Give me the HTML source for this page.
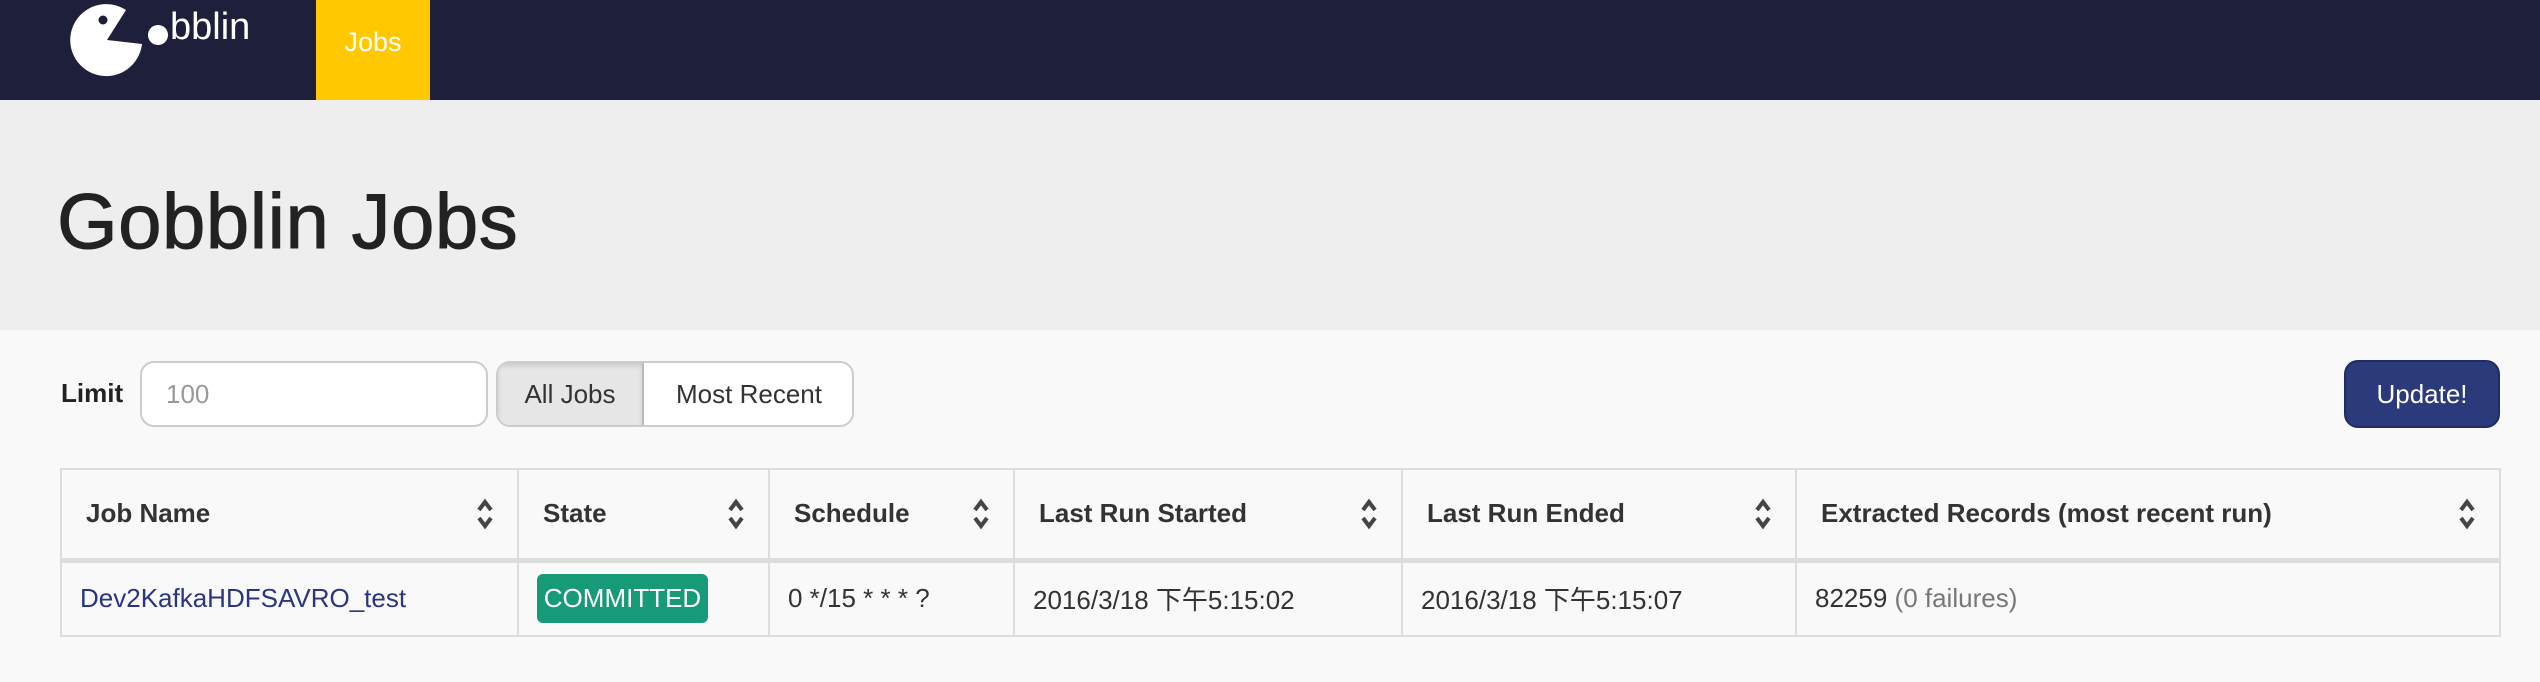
<!DOCTYPE html>
<html><head><meta charset="utf-8"><style>
*{margin:0;padding:0;box-sizing:border-box}
body{width:2540px;height:682px;background:#f9f9f9;font-family:"Liberation Sans","Noto Sans CJK SC",sans-serif;color:#333;position:relative;overflow:hidden}
.nav{position:absolute;left:0;top:0;width:2540px;height:100px;background:#1e1f3b}
.tab{position:absolute;left:316px;top:0;width:114px;height:100px;background:#ffc800;color:#fff;font-size:27px;line-height:84px;text-align:center}
.jumbo{position:absolute;left:0;top:100px;width:2540px;height:230px;background:#eeeeee}
.jumbo h1{position:absolute;left:57px;top:76px;font-size:78px;font-weight:normal;color:#222;letter-spacing:0.5px;-webkit-text-stroke:1px #222}
.abs{position:absolute}
.input{left:140px;top:361px;width:348px;height:66px;background:#fff;border:2px solid #ccc;border-radius:14px;font-size:26px;color:#999;padding-left:24px;line-height:62px}
.bg{left:496px;top:361px;width:358px;height:66px;border:2px solid #ccc;border-radius:14px;background:#fff;overflow:hidden;font-size:26px;line-height:62px}
.bg .a{position:absolute;left:0;top:0;width:146px;height:62px;background:#e6e6e6;border-right:2px solid #bbb;text-align:center;box-shadow:inset 0 3px 5px rgba(0,0,0,.12)}
.bg .b{position:absolute;left:146px;top:0;width:210px;text-align:center}
.upd{left:2344px;top:360px;width:156px;height:68px;background:#2b3a7b;border:2px solid #1f2b63;border-radius:14px;color:#fff;font-size:26px;line-height:64px;text-align:center}
table{position:absolute;left:60px;top:468px;width:2441px;border-collapse:collapse;font-size:26px}
td,th{border:2px solid #ddd;text-align:left;position:relative}
th{height:91px;padding-left:24px;font-weight:bold;color:#333;border-bottom:5px solid #ddd}
td{height:76px;padding-left:18px}
th svg{position:absolute;right:24px;top:28px}
.badge{display:inline-block;background:#179a77;color:#fff;border-radius:6px;padding:0 6px;height:49px;line-height:49px;width:171px;text-align:center}
</style></head><body>
<div class="nav">
<svg class="abs" style="left:70px;top:2px" width="200" height="80" viewBox="70 2 200 80">
<path d="M107 40 L142 44 A36 36 0 1 1 126 10 Z" fill="#fff"/>
<circle cx="103" cy="20" r="4.5" fill="#1e1f3b"/>
<circle cx="158" cy="35" r="10" fill="#fff"/>
</svg>
<div class="abs" style="left:170px;top:6px;color:#fff;font-size:38px">bblin</div>
<div class="tab">Jobs</div>
</div>
<div class="jumbo"><h1>Gobblin Jobs</h1></div>
<div class="abs" style="left:61px;top:378px;font-size:26px;font-weight:bold;color:#222">Limit</div>
<div class="abs input">100</div>
<div class="abs bg"><div class="a">All Jobs</div><div class="b">Most Recent</div></div>
<div class="abs upd">Update!</div>
<table>
<tr>
<th style="width:457px">Job Name<svg width="16" height="32" viewBox="0 0 16 32"><path d="M2 12 L8 4 L14 12 M2 20 L8 28 L14 20" stroke="#444" stroke-width="4" fill="none"/></svg></th>
<th style="width:251px">State<svg width="16" height="32" viewBox="0 0 16 32"><path d="M2 12 L8 4 L14 12 M2 20 L8 28 L14 20" stroke="#444" stroke-width="4" fill="none"/></svg></th>
<th style="width:245px">Schedule<svg width="16" height="32" viewBox="0 0 16 32"><path d="M2 12 L8 4 L14 12 M2 20 L8 28 L14 20" stroke="#444" stroke-width="4" fill="none"/></svg></th>
<th style="width:388px">Last Run Started<svg width="16" height="32" viewBox="0 0 16 32"><path d="M2 12 L8 4 L14 12 M2 20 L8 28 L14 20" stroke="#444" stroke-width="4" fill="none"/></svg></th>
<th style="width:394px">Last Run Ended<svg width="16" height="32" viewBox="0 0 16 32"><path d="M2 12 L8 4 L14 12 M2 20 L8 28 L14 20" stroke="#444" stroke-width="4" fill="none"/></svg></th>
<th>Extracted Records (most recent run)<svg width="16" height="32" viewBox="0 0 16 32"><path d="M2 12 L8 4 L14 12 M2 20 L8 28 L14 20" stroke="#444" stroke-width="4" fill="none"/></svg></th>
</tr>
<tr>
<td style="color:#2b3580">Dev2KafkaHDFSAVRO_test</td>
<td><span class="badge">COMMITTED</span></td>
<td>0 */15 * * * ?</td>
<td>2016/3/18 下午5:15:02</td>
<td>2016/3/18 下午5:15:07</td>
<td>82259 <span style="color:#777">(0 failures)</span></td>
</tr>
</table>
</body></html>
